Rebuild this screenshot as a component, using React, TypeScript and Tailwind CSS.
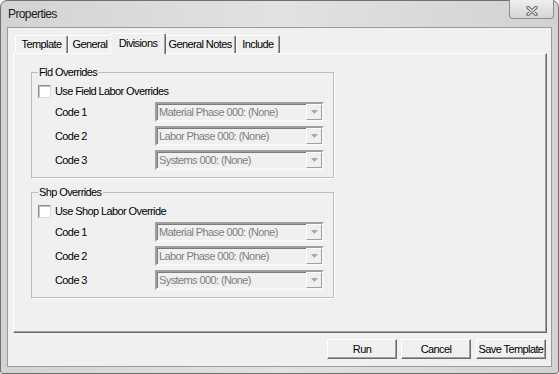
import React from "react";

const TABS = [
  { label: "Template", w: "w-[53px]" },
  { label: "General", w: "w-[44px]" },
  { label: "Divisions", w: "w-[56px]", active: true },
  { label: "General Notes", w: "w-[72px]" },
  { label: "Include", w: "w-[44px]" },
];

const CODES = [
  { label: "Code 1", value: "Material Phase 000: (None)" },
  { label: "Code 2", value: "Labor Phase 000: (None)" },
  { label: "Code 3", value: "Systems 000: (None)" },
];

function CloseGlyph() {
  return (
    <svg width="12" height="10" viewBox="0 0 12 10">
      <path d="M2 1.5 L10 8.5 M10 1.5 L2 8.5" stroke="#616161" strokeWidth="3.4" strokeLinecap="round" />
      <path d="M2 1.5 L10 8.5 M10 1.5 L2 8.5" stroke="#ececec" strokeWidth="1.5" strokeLinecap="round" />
    </svg>
  );
}

function Combo({ value }: { value: string }) {
  return (
    <div className="flex h-[20px] w-[169px] border-2 border-t-[#a0a0a0] border-l-[#a0a0a0] border-r-[#f7f7f7] border-b-[#f7f7f7] bg-[#f0f0f0] shadow-[inset_1px_1px_0_#7d7d7d]">
      <span className="flex-1 truncate pl-[2px] leading-[16px] text-[#7f7f7f]">{value}</span>
      <span className="flex w-[16px] items-center justify-center border border-t-white border-l-white border-r-[#a0a0a0] border-b-[#a0a0a0] bg-[#f0f0f0]">
        <svg width="7" height="4" viewBox="0 0 7 4">
          <path d="M0 0 H7 L3.5 4 Z" fill="#a6a6a6" />
        </svg>
      </span>
    </div>
  );
}

function GroupBox({ title, check }: { title: string; check: string }) {
  return (
    <fieldset className="ml-[17px] h-[112px] w-[303px] border border-[#bcbcbc] p-0 shadow-[1px_1px_0_#ffffff]">
      <legend className="ml-[6px] px-[1px] leading-[13px]">{title}</legend>
      {/* checkbox */}
      <div className="mt-[6px] ml-[6px] flex h-[13px] items-center gap-[4px]">
        <span className="h-[13px] w-[13px] border border-t-[#8e8e8e] border-l-[#8e8e8e] border-r-[#dcdcdc] border-b-[#dcdcdc] bg-white shadow-[inset_1px_1px_0_#c8c8c8]" />
        <span className="leading-[13px]">{check}</span>
      </div>
      <div className="mt-[4px] flex flex-col gap-[4px]">
        {CODES.map((c) => (
          <div key={c.label} className="flex h-[20px] items-center">
            <span className="w-[123px] pl-[23px] leading-[13px]">{c.label}</span>
            <Combo value={c.value} />
          </div>
        ))}
      </div>
    </fieldset>
  );
}

function Btn({ children, className = "" }: { children: React.ReactNode; className?: string }) {
  return (
    <button
      type="button"
      className={`h-[20px] w-[70px] border border-t-white border-l-white border-r-[#696969] border-b-[#696969] bg-[#f0f0f0] leading-[16px] shadow-[inset_-1px_-1px_0_#a0a0a0] ${className}`}
    >
      {children}
    </button>
  );
}

export default function App() {
  return (
    <div className="h-[374px] w-[559px] bg-white font-['Liberation_Sans',Arial,sans-serif] text-[11px] tracking-[-0.6px] text-black">
      <div className="flex h-full flex-col rounded-t-[7px] rounded-b-[3px] border border-[#707070] bg-gradient-to-r from-[#d3d3d3] via-[#e2e2e2] to-[#d2d2d2]">
        {/* title bar */}
        <div className="flex h-[26px] shrink-0 items-start justify-between">
          <span className="ml-[7px] mt-[6px] text-[12px] leading-[14px] tracking-[-0.6px] text-[#1b1b1b]">
            Properties
          </span>
          <div className="-mt-[1px] mr-[4px] flex h-[19px] w-[45px] items-center justify-center rounded-b-[4px] border border-t-0 border-[#8c8c8c] bg-gradient-to-b from-[#efefef] to-[#d7d7d7] pt-[3px]">
            <CloseGlyph />
          </div>
        </div>

        {/* client area */}
        <div className="mx-[6px] mb-[6px] flex flex-1 flex-col border border-[#9b9b9b] bg-[#f0f0f0]">
          {/* tab strip */}
          <div className="mt-[5px] flex h-[20px] items-end pl-[7px]">
            {TABS.map((t) =>
              t.active ? (
                <div
                  key={t.label}
                  className={`relative z-10 -mx-[2px] -mb-[1px] h-[21px] ${t.w} rounded-tr-[2px] border-t border-l border-r border-t-white border-l-white border-r-[#696969] bg-[#f0f0f0] pt-[3px] text-center leading-[13px] shadow-[inset_-1px_0_0_#a0a0a0]`}
                >
                  {t.label}
                </div>
              ) : (
                <div
                  key={t.label}
                  className={`h-[18px] ${t.w} rounded-tr-[2px] border-t border-l border-r border-t-white border-l-white border-r-[#696969] bg-[#f0f0f0] pt-[2px] text-center leading-[13px] shadow-[inset_-1px_0_0_#a0a0a0]`}
                >
                  {t.label}
                </div>
              )
            )}
          </div>

          {/* tab panel */}
          <div className="ml-[5px] mr-[4px] h-[280px] border border-t-white border-l-white border-r-[#696969] border-b-[#696969] shadow-[inset_-1px_-1px_0_#a0a0a0]">
            <div className="mt-[12px]">
              <GroupBox title="Fld Overrides" check="Use Field Labor Overrides" />
            </div>
            <div className="mt-[8px]">
              <GroupBox title="Shp Overrides" check="Use Shop Labor Override" />
            </div>
          </div>

          {/* buttons */}
          <div className="mt-[6px] mr-[5px] flex justify-end">
            <Btn>Run</Btn>
            <Btn className="ml-[4px]">Cancel</Btn>
            <Btn className="ml-[5px]">Save Template</Btn>
          </div>
        </div>
      </div>
    </div>
  );
}
